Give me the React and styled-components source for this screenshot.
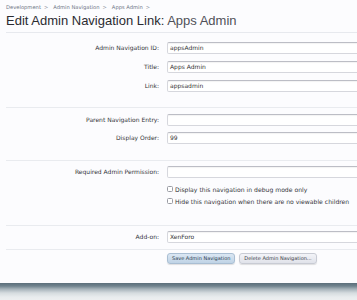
import React from "react";
import styled, { createGlobalStyle } from "styled-components";

const GlobalStyle = createGlobalStyle`
  html, body {
    margin: 0;
    padding: 0;
    overflow: hidden;
    background: #eceff0;
  }
  * { box-sizing: border-box; }
`;

const Page = styled.div`
  height: 283px;
  background: #fcfcfe;
  padding-left: 6px;
  overflow: hidden;
  font-family: "DejaVu Sans", Verdana, sans-serif;
  color: #333;
`;

const Breadcrumb = styled.div`
  display: flex;
  gap: 5px;
  padding-top: 4px;
  height: 10px;
  font-size: 5.2px;
  line-height: 6px;
  color: #6c7585;
`;

const Crumb = styled.span`
  &::after {
    content: ">";
    margin-left: 3px;
    color: #8a8f98;
  }
`;

const Header = styled.div`
  padding-top: 3px;
  padding-bottom: 3px;
  border-bottom: 1px solid #e7e9ee;
`;

const Title = styled.h1`
  margin: 0;
  font-family: "Liberation Sans", Arial, sans-serif;
  font-weight: normal;
  font-size: 13px;
  line-height: 16px;
  color: #2b2b30;
`;

const TitleSub = styled.span`
  color: #505058;
`;

const Section = styled.div`
  display: grid;
  grid-template-columns: 153px 1fr;
  column-gap: 8px;
  row-gap: ${(p) => p.$gap ?? 7}px;
  padding-top: ${(p) => p.$top}px;
  padding-bottom: ${(p) => p.$bottom}px;
  border-bottom: ${(p) => (p.$last ? "none" : "1px solid #e9ebef")};
`;

const Label = styled.label`
  justify-self: end;
  align-self: center;
  font-size: 6px;
  line-height: 12px;
  color: #34343a;
  white-space: nowrap;
`;

const Input = styled.div`
  width: 220px;
  height: 12px;
  background: #fff;
  border: 1px solid #d6d7dd;
  border-top-color: #bcbdc5;
  border-radius: 2px;
  box-shadow: inset 0 1px 1px rgba(0, 0, 0, 0.05);
  padding-left: 2px;
  font-size: 6px;
  line-height: 10px;
  color: #333;
`;

const Checks = styled.div`
  grid-column: 2;
  margin-top: -2px;
  display: flex;
  flex-direction: column;
`;

const CheckRow = styled.div`
  display: flex;
  align-items: center;
  gap: 2px;
  height: 12px;
  font-size: 6.1px;
  color: #34343a;
  white-space: nowrap;
`;

const Box = styled.span`
  width: 6px;
  height: 6px;
  border: 1px solid #9a9ca4;
  border-radius: 1.5px;
  background: #fff;
`;

const Buttons = styled.div`
  grid-column: 2;
  display: flex;
  gap: 4px;
`;

const Button = styled.button`
  height: 11px;
  padding: 0 4px;
  font-family: "DejaVu Sans", Verdana, sans-serif;
  font-size: 5px;
  line-height: 9px;
  border-radius: 3px;
  color: ${(p) => (p.$primary ? "#2d3e52" : "#3a3d47")};
  border: 1px solid ${(p) => (p.$primary ? "#a9bed3" : "#c8cbd4")};
  background: ${(p) =>
    p.$primary
      ? "linear-gradient(#dbe7f3, #bfd3e6)"
      : "linear-gradient(#f3f4f8, #e0e2ea)"};
  box-shadow: 0 1px 1px rgba(0, 0, 0, 0.12);
  white-space: nowrap;
`;

const Footer = styled.div`
  height: 17px;
  background: linear-gradient(
    #5c6f7b 0px,
    #6f828d 3px,
    #a5b2b9 6px,
    #d5dcdf 10px,
    #e8ecee 14px,
    #eceff0 17px
  );
`;

export default function App() {
  return (
    <>
      <GlobalStyle />
      <Page>
        <Breadcrumb>
          <Crumb>Development</Crumb>
          <Crumb>Admin Navigation</Crumb>
          <Crumb>Apps Admin</Crumb>
        </Breadcrumb>
        <Header>
          <Title>
            Edit Admin Navigation Link: <TitleSub>Apps Admin</TitleSub>
          </Title>
        </Header>

        <Section $top={9} $bottom={15} $gap={7}>
          <Label>Admin Navigation ID:</Label>
          <Input>appsAdmin</Input>
          <Label>Title:</Label>
          <Input>Apps Admin</Input>
          <Label>Link:</Label>
          <Input>appsadmin</Input>
        </Section>

        <Section $top={6} $bottom={16} $gap={6}>
          <Label>Parent Navigation Entry:</Label>
          <Input />
          <Label>Display Order:</Label>
          <Input>99</Input>
        </Section>

        <Section $top={5} $bottom={18} $gap={7}>
          <Label>Required Admin Permission:</Label>
          <Input />
          <Checks>
            <CheckRow>
              <Box />
              Display this navigation in debug mode only
            </CheckRow>
            <CheckRow>
              <Box />
              Hide this navigation when there are no viewable children
            </CheckRow>
          </Checks>
        </Section>

        <Section $top={5} $bottom={6}>
          <Label>Add-on:</Label>
          <Input>XenForo</Input>
        </Section>

        <Section $top={3} $bottom={0} $last>
          <Buttons>
            <Button $primary>Save Admin Navigation</Button>
            <Button>Delete Admin Navigation...</Button>
          </Buttons>
        </Section>
      </Page>
      <Footer />
    </>
  );
}
